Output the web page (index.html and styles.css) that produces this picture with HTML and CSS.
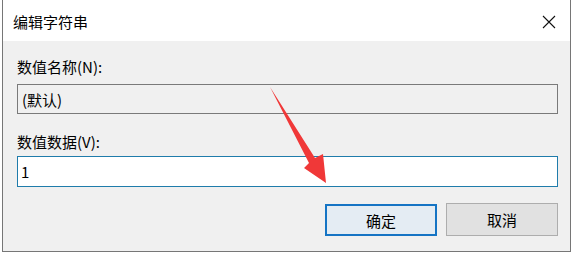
FILE: index.html
```html
<!DOCTYPE html>
<html lang="zh-CN">
<head>
<meta charset="utf-8">
<title>编辑字符串</title>
<link rel="stylesheet" href="styles.css">
</head>
<body>
<div class="page">
  <div class="dialog">
    <div class="titlebar">
      <span class="title">编辑字符串</span>
      <span class="close">
        <svg width="14" height="14" viewBox="0 0 14 14"><path d="M1 1 L13 13 M13 1 L1 13" stroke="#111" stroke-width="1.1" fill="none"/></svg>
      </span>
    </div>
    <div class="content">
      <div class="label first">数值名称(N):</div>
      <div class="field readonly">(默认)</div>
      <div class="label second">数值数据(V):</div>
      <div class="field input">1</div>
      <div class="buttons">
        <div class="btn primary">确定</div>
        <div class="btn">取消</div>
      </div>
    </div>
  </div>
  <svg class="arrow" width="579" height="255" viewBox="0 0 579 255">
    <polygon points="270,87 315,158 323,154 326,183 304,168 309,163" fill="#f03838"/>
  </svg>
</div>
</body>
</html>
```
FILE: styles.css
```css
html, body {
  margin: 0;
  padding: 0;
  background: #fff;
}
.page {
  position: relative;
  width: 579px;
  height: 255px;
  font-family: "Noto Sans CJK SC", "Microsoft YaHei", sans-serif;
  color: #000;
}
.dialog {
  margin-left: 2px;
  width: 569px;
  height: 252px;
  box-sizing: border-box;
  border: 1px solid #767676;
  border-top: none;
  background: #f0f0f0;
  display: flex;
  flex-direction: column;
}
.titlebar {
  height: 41px;
  background: #fff;
  display: flex;
  align-items: center;
  justify-content: space-between;
  padding: 0 14px 0 10px;
  box-sizing: border-box;
}
.title {
  font-size: 15px;
  line-height: 20px;
  margin-top: 2px;
}
.close {
  display: flex;
  margin-top: 2px;
}
.content {
  padding: 0 11px 0 14px;
  display: flex;
  flex-direction: column;
}
.label {
  font-size: 15px;
  line-height: 20px;
}
.label.first { margin-top: 16px; }
.label.second { margin-top: 18px; }
.field {
  box-sizing: border-box;
  width: 541px;
  font-size: 15px;
  padding-left: 4px;
  display: flex;
  align-items: center;
}
.readonly {
  margin-top: 7px;
  height: 30px;
  border: 1px solid #7a7a7a;
  background: #f0f0f0;
}
.input {
  margin-top: 4px;
  height: 31px;
  border: 1px solid #1f7cab;
  background: #fff;
  padding-left: 3px;
}
.buttons {
  display: flex;
  justify-content: flex-end;
  gap: 9px;
  margin-top: 16px;
  padding-right: 1px;
}
.btn {
  width: 112px;
  height: 33px;
  box-sizing: border-box;
  border: 1px solid #adadad;
  background: #e1e1e1;
  display: flex;
  align-items: center;
  justify-content: center;
  font-size: 15px;
}
.btn.primary {
  height: 32px;
  margin-top: 1px;
  border: 2px solid #1574c4;
  background: #e4ecf3;
}
.arrow {
  position: absolute;
  left: 0;
  top: 0;
  pointer-events: none;
}
```
